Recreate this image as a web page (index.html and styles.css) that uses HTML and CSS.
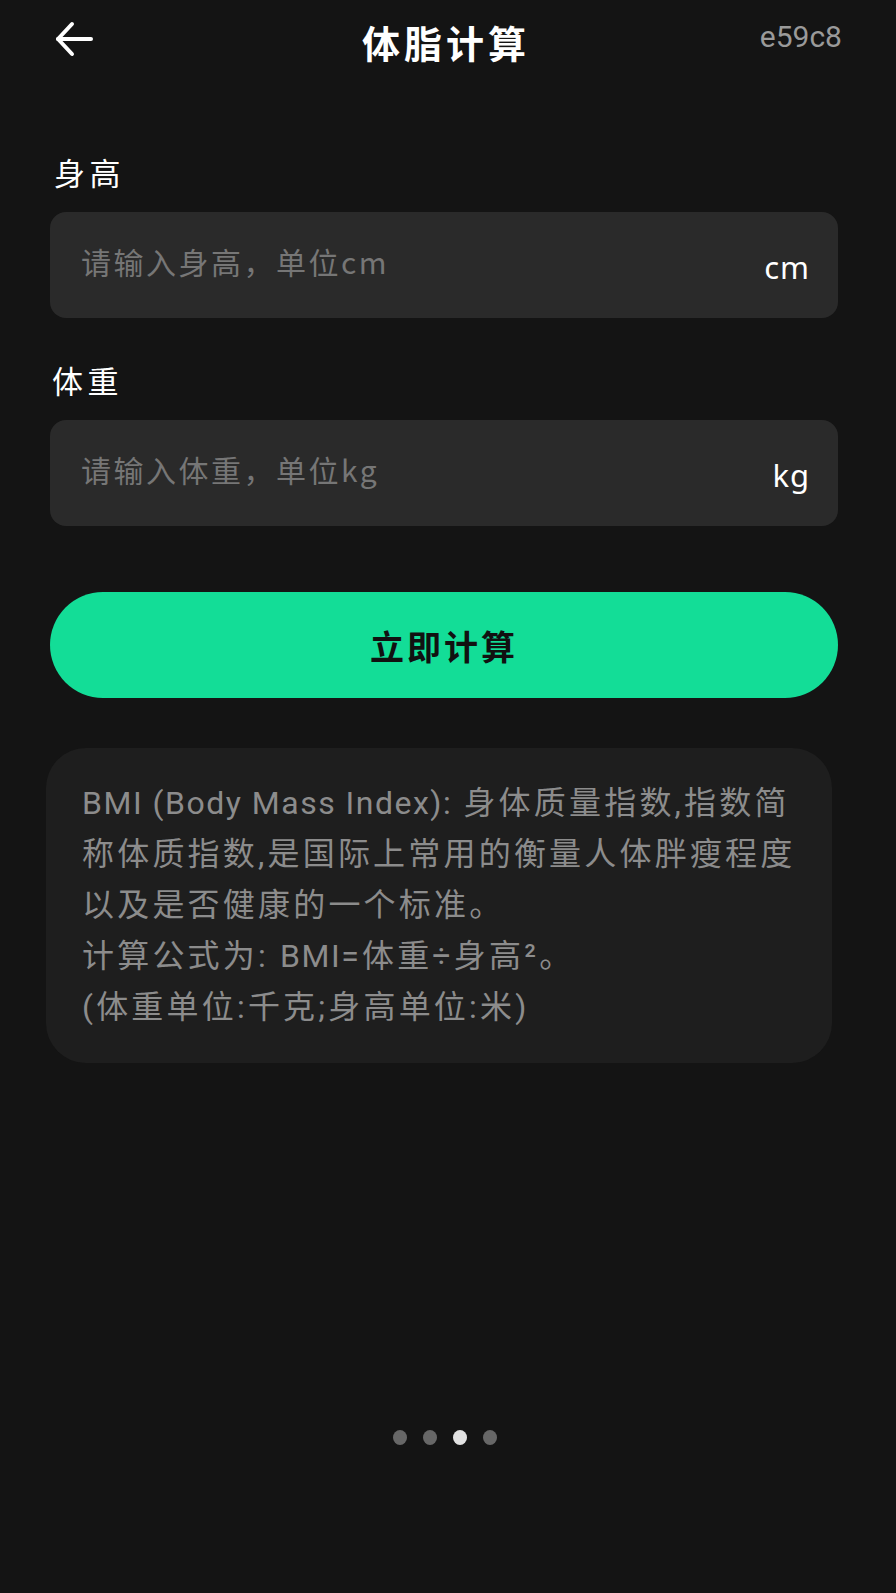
FILE: index.html
```html
<!DOCTYPE html>
<html lang="zh-CN">
<head>
<meta charset="utf-8">
<title>体脂计算</title>
<link rel="stylesheet" href="styles.css">
</head>
<body>
<div class="page">
  <header class="topbar">
    <span class="back" aria-label="返回">
      <svg width="40" height="36" viewBox="0 0 40 36" fill="none" stroke="#fff" stroke-width="4" stroke-linecap="round" stroke-linejoin="round">
        <path d="M37 18H4"/>
        <path d="M18 3L4 18l14 15"/>
      </svg>
    </span>
    <h1 class="title">体脂计算</h1>
    <span class="code">e59c8</span>
  </header>

  <main class="form">
    <label class="label">身高</label>
    <div class="field">
      <span class="placeholder">请输入身高，单位cm</span>
      <span class="unit">cm</span>
    </div>

    <label class="label label-second">体重</label>
    <div class="field">
      <span class="placeholder">请输入体重，单位kg</span>
      <span class="unit">kg</span>
    </div>

    <button class="calc">立即计算</button>

    <section class="info">
      <p><span class="en">BMI (Body Mass Index):</span> 身体质量指数,指数简称体质指数,是国际上常用的衡量人体胖瘦程度以及是否健康的一个标准。<br>计算公式为: <span class="en">BMI</span>=体重÷身高²。<br>(体重单位:千克;身高单位:米)</p>
    </section>
  </main>

  <nav class="dots">
    <span class="dot"></span>
    <span class="dot"></span>
    <span class="dot active"></span>
    <span class="dot"></span>
  </nav>
</div>
</body>
</html>
```

FILE: styles.css
```css
* { box-sizing: border-box; }

html, body {
  margin: 0;
  padding: 0;
  background: #141414;
}

body {
  font-family: Roboto, "Noto Sans CJK SC", sans-serif;
  color: #fff;
}

.page {
  width: 896px;
  min-height: 1593px;
  padding: 0 58px 0 50px;
  background: #141414;
}

.topbar {
  height: 76px;
  display: flex;
  align-items: center;
  justify-content: space-between;
}

.back {
  display: flex;
  width: 86px;
  padding-left: 4px;
  padding-top: 2px;
}

.title {
  margin: 0;
  font-family: "Noto Sans CJK SC", sans-serif;
  font-size: 38px;
  font-weight: 700;
  letter-spacing: 4px;
  color: #fff;
  padding-top: 6px;
}

.code {
  width: 86px;
  text-align: right;
  font-family: Roboto, sans-serif;
  font-size: 30px;
  color: #9a9a9a;
  margin-right: -4px;
  padding-bottom: 4px;
}

.form {
  display: flex;
  flex-direction: column;
}

.label {
  display: block;
  margin-top: 76px;
  margin-left: 4px;
  height: 40px;
  line-height: 40px;
  font-family: "Noto Sans CJK SC", sans-serif;
  font-size: 31px;
  letter-spacing: 4.5px;
  color: #fff;
}

.label-second {
  margin-top: 42px;
  margin-left: 2px;
}

.field {
  margin-top: 20px;
  height: 106px;
  border-radius: 16px;
  background: #2a2a2a;
  display: flex;
  align-items: center;
  justify-content: space-between;
  padding: 0 28px 0 31px;
}

.placeholder {
  font-family: "Noto Sans CJK SC", sans-serif;
  font-size: 30px;
  letter-spacing: 2.5px;
  color: #767676;
  margin-top: -8px;
}

.unit {
  font-family: "Noto Sans", sans-serif;
  font-size: 31px;
  color: #fff;
  letter-spacing: 1px;
  margin-top: 4px;
}

.calc {
  margin-top: 66px;
  height: 106px;
  width: 100%;
  border: 0;
  border-radius: 53px;
  background: #13dd97;
  color: #111;
  font-family: "Noto Sans CJK SC", sans-serif;
  font-size: 34px;
  font-weight: 700;
  letter-spacing: 3px;
  cursor: pointer;
}

.info {
  margin-top: 50px;
  margin-left: -4px;
  margin-right: 6px;
  border-radius: 40px;
  background: #1e1e1e;
  padding: 30px 18px 30px 36px;
}

.info p {
  margin: 0;
  font-family: Roboto, "Noto Sans CJK SC", sans-serif;
  font-size: 32px;
  line-height: 51px;
  letter-spacing: 3.2px;
  color: #8c8c8c;
}

.info .en {
  letter-spacing: 1.5px;
}

.dots {
  display: flex;
  justify-content: center;
  gap: 16px;
  margin-top: 367px;
  padding-left: 2px;
}

.dot {
  width: 14px;
  height: 15px;
  border-radius: 50%;
  background: #676767;
}

.dot.active {
  background: #e2e2e2;
}
```
